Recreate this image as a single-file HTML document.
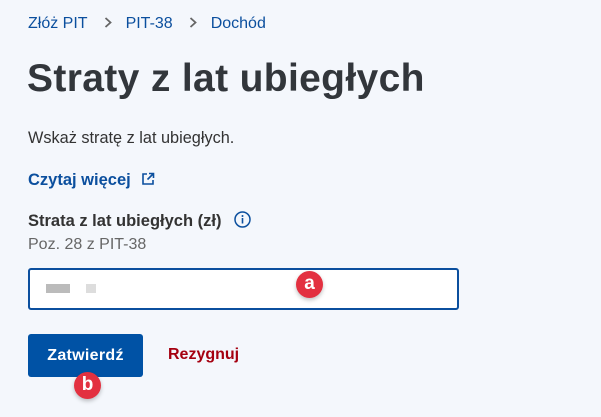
<!DOCTYPE html><html><head><style>
body{margin:0;width:601px;height:417px;background:#f4f7fc;font-family:"Liberation Sans",sans-serif;position:relative;overflow:hidden}
.a{position:absolute;white-space:nowrap}
.bc{top:15px;left:28px;font-size:16px;color:#0b4f9e}
.bc span.s{color:#777;margin:0 14px 0 16px;display:inline-block;width:8px}
h1{position:absolute;left:27px;top:57px;margin:0;font-size:39px;font-weight:bold;color:#32363b;letter-spacing:0.35px}
.badge{position:absolute;width:27px;height:27px;border-radius:50%;background:#e33040;color:#fff;font-weight:bold;font-size:19px;text-align:center;line-height:25px;box-shadow:0 2px 4px rgba(0,0,0,.25)}
</style></head><body>
<div class="a bc">Złóż PIT<span class="s"><svg width="8" height="11" viewBox="0 0 8 11" fill="none" stroke="#666" stroke-width="1.8"><path d="M1.5 1l5 4.5-5 4.5"/></svg></span>PIT-38<span class="s"><svg width="8" height="11" viewBox="0 0 8 11" fill="none" stroke="#666" stroke-width="1.8"><path d="M1.5 1l5 4.5-5 4.5"/></svg></span>Dochód</div>
<h1>Straty z lat ubiegłych</h1>
<div class="a" style="top:129px;left:28px;font-size:16.3px;color:#333">Wskaż stratę z lat ubiegłych.</div>
<div class="a" style="top:171px;left:28px;font-size:16.5px;font-weight:bold;color:#0b4f9e">Czytaj więcej
<svg width="14" height="14" viewBox="0 0 14 14" style="margin-left:6px;vertical-align:-1px" fill="none" stroke="#0b4f9e" stroke-width="1.6"><path d="M6 2H2v10h10V8M8 1.5h4.5V6M12.5 1.5L6.5 7.5"/></svg></div>
<div class="a" style="top:211px;left:28px;font-size:16.5px;font-weight:bold;color:#333">Strata z lat ubiegłych (zł)
<svg width="17" height="17" viewBox="0 0 17 17" style="margin-left:8px;vertical-align:-2px"><circle cx="8.5" cy="8.5" r="7.5" fill="none" stroke="#0b4f9e" stroke-width="1.5"/><rect x="7.7" y="7" width="1.6" height="5.5" fill="#0b4f9e"/><circle cx="8.5" cy="5" r="1" fill="#0b4f9e"/></svg></div>
<div class="a" style="top:236px;left:28px;font-size:16px;color:#666">Poz. 28 z PIT-38</div>
<div class="a" style="top:268px;left:28px;width:427px;height:38px;border:2px solid #0b4f9e;border-radius:3px;background:#fff"></div>
<div class="a" style="top:284px;left:46px;width:24px;height:9px;background:#bbb"></div>
<div class="a" style="top:284px;left:86px;width:10px;height:9px;background:#ddd"></div>
<div class="badge" style="left:296px;top:271px">a</div>
<div class="a" style="top:334px;left:28px;width:115px;height:43px;background:#0052a5;border-radius:3px;color:#fff;font-weight:bold;font-size:16px;text-align:center;line-height:43px;letter-spacing:0.3px">Zatwierdź</div>
<div class="a" style="top:346px;left:168px;font-size:16px;font-weight:bold;color:#a50010">Rezygnuj</div>
<div class="badge" style="left:74px;top:372px">b</div>
</body></html>
